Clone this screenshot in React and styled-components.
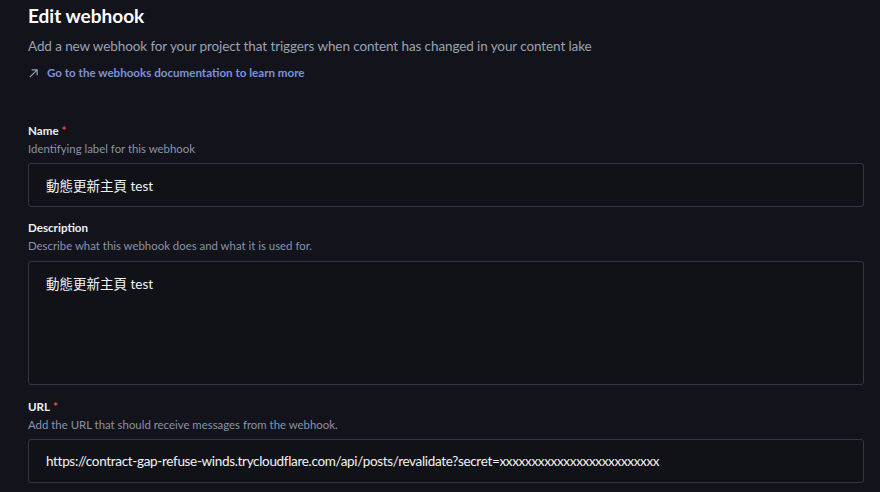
import styled, { createGlobalStyle } from "styled-components"

const GlobalStyle = createGlobalStyle`
  html, body {
    margin: 0;
    padding: 0;
    background: #13141b;
  }
  body {
    font-family: Lato, "Noto Sans CJK TC", sans-serif;
  }
`

const Page = styled.div`
  width: 880px;
  height: 492px;
  overflow: hidden;
  box-sizing: border-box;
  padding: 3px 16px 0 28px;
  color: #e4e6ed;
`

const Title = styled.h1`
  margin: 0;
  font-size: 19px;
  font-weight: 700;
  line-height: 26px;
  color: #ffffff;
`

const Subtitle = styled.p`
  margin: 7px 0 0;
  font-size: 13.5px;
  letter-spacing: -0.1px;
  line-height: 20px;
  color: #9aa1b4;
`

const DocLink = styled.a`
  display: flex;
  align-items: center;
  gap: 8px;
  margin-top: 9px;
  font-size: 11.6px;
  font-weight: 700;
  line-height: 16px;
  color: #7d91d6;
  text-decoration: none;
  svg {
    color: #9aa1b4;
  }
`

const Form = styled.form`
  display: flex;
  flex-direction: column;
  gap: 13px;
  margin-top: 42px;
`

const Field = styled.div`
  display: flex;
  flex-direction: column;
  margin-top: ${p => p.$extra || 0}px;
`

const Label = styled.label`
  font-size: 11.6px;
  font-weight: 700;
  line-height: 16px;
  color: #eef0f5;
`

const Required = styled.span`
  color: #e5484d;
  margin-left: 3px;
`

const Help = styled.div`
  margin-top: 2px;
  font-size: 11.4px;
  line-height: 16px;
  color: #8a92a8;
`

const fieldBox = `
  box-sizing: border-box;
  width: 100%;
  background: #111218;
  border: 1px solid #33364a;
  border-radius: 3px;
  color: #f1f2f6;
  font-family: Lato, "Noto Sans CJK TC", sans-serif;
  font-size: 13.5px;
  outline: none;
`

const Input = styled.input`
  ${fieldBox}
  margin-top: 6px;
  height: 44px;
  padding: 0 17px;
  letter-spacing: ${p => p.$tight ? "-0.33px" : "0"};
`

const TextArea = styled.textarea`
  ${fieldBox}
  margin-top: 7px;
  height: 124px;
  padding: 12px 17px;
  line-height: 20px;
  resize: none;
`

const ArrowIcon = () => (
  <svg width="11" height="11" viewBox="0 0 12 12" fill="none" stroke="currentColor" strokeWidth="1.3">
    <path d="M2 10 L10 2 M4 2 H10 V8" />
  </svg>
)

const App = () => {
  return (
    <>
      <GlobalStyle />
      <Page>
        <Title>Edit webhook</Title>
        <Subtitle>Add a new webhook for your project that triggers when content has changed in your content lake</Subtitle>
        <DocLink href="#">
          <ArrowIcon />
          Go to the webhooks documentation to learn more
        </DocLink>
        <Form>
          <Field>
            <Label>Name<Required>*</Required></Label>
            <Help>Identifying label for this webhook</Help>
            <Input defaultValue="動態更新主頁 test" />
          </Field>
          <Field>
            <Label>Description</Label>
            <Help>Describe what this webhook does and what it is used for.</Help>
            <TextArea defaultValue="動態更新主頁 test" />
          </Field>
          <Field $extra={1}>
            <Label>URL<Required>*</Required></Label>
            <Help>Add the URL that should receive messages from the webhook.</Help>
            <Input $tight defaultValue="https://contract-gap-refuse-winds.trycloudflare.com/api/posts/revalidate?secret=xxxxxxxxxxxxxxxxxxxxxxxxx" />
          </Field>
        </Form>
      </Page>
    </>
  )
}

export default App
